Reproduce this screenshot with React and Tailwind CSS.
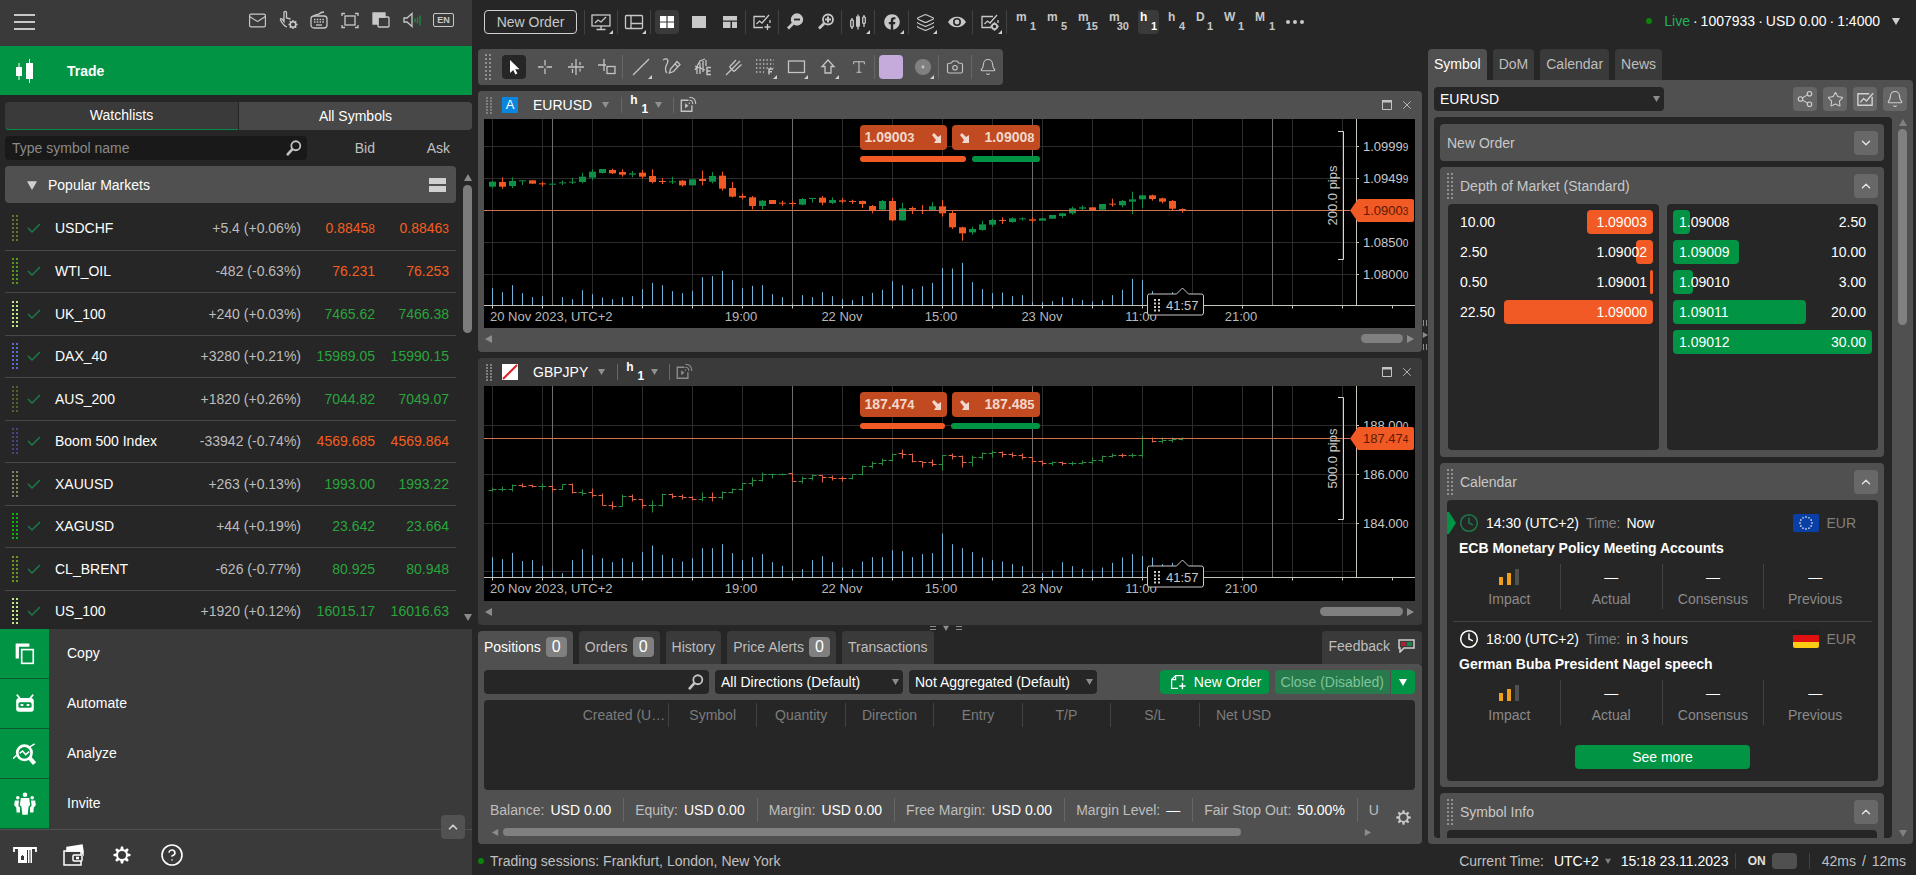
import { useState } from "react";
import { Mail, Bell, Camera, Layers, Share2, Star, Clock, Type, X, ChevronUp, ChevronDown, CircleHelp } from "lucide-react";
import { FaFacebook } from "react-icons/fa";

const SYMBOLS = [
  { name: "USDCHF", change: "+5.4 (+0.06%)", bid: "0.88458", ask: "0.88463", pip: true, up: false, signal: "#66772c" },
  { name: "WTI_OIL", change: "-482 (-0.63%)", bid: "76.231", ask: "76.253", up: false, signal: "#55981c" },
  { name: "UK_100", change: "+240 (+0.03%)", bid: "7465.62", ask: "7466.38", up: true, signal: "#bdea84" },
  { name: "DAX_40", change: "+3280 (+0.21%)", bid: "15989.05", ask: "15990.15", up: true, signal: "#5570cc" },
  { name: "AUS_200", change: "+1820 (+0.26%)", bid: "7044.82", ask: "7049.07", up: true, signal: "#52642c" },
  { name: "Boom 500 Index", change: "-33942 (-0.74%)", bid: "4569.685", ask: "4569.864", up: false, signal: "#474780" },
  { name: "XAUUSD", change: "+263 (+0.13%)", bid: "1993.00", ask: "1993.22", up: true, signal: "#87875c" },
  { name: "XAGUSD", change: "+44 (+0.19%)", bid: "23.642", ask: "23.664", up: true, signal: "#12b412" },
  { name: "CL_BRENT", change: "-626 (-0.77%)", bid: "80.925", ask: "80.948", up: true, signal: "#689622" },
  { name: "US_100", change: "+1920 (+0.12%)", bid: "16015.17", ask: "16016.63", up: true, signal: "#bdea84" }
];

// [direction, body top, body bottom, wick top, wick bottom] in thirds of a pixel
const CANDLES = [
  [1, 188, 203, 185, 207], [0, 189, 203, 175, 209], [1, 186, 201, 175, 207], [1, 184, 186, 184, 198],
  [0, 184, 194, 184, 194], [0, 193, 196, 188, 203], [1, 194, 196, 188, 199], [1, 190, 192, 184, 198],
  [1, 188, 190, 176, 195], [1, 173, 189, 161, 193], [1, 158, 176, 151, 183], [1, 150, 162, 150, 164],
  [0, 153, 163, 149, 165], [0, 159, 167, 151, 173], [1, 163, 167, 156, 175], [0, 161, 173, 153, 179],
  [0, 171, 189, 151, 193], [0, 186, 189, 177, 195], [1, 187, 190, 173, 195], [0, 185, 199, 183, 203],
  [1, 181, 199, 181, 199], [0, 180, 186, 155, 199], [1, 171, 188, 159, 193], [0, 170, 209, 158, 215],
  [0, 207, 233, 189, 235], [0, 231, 236, 223, 241], [0, 235, 261, 231, 271], [1, 245, 261, 243, 271],
  [0, 243, 255, 243, 255], [0, 251, 254, 245, 261], [0, 252, 255, 245, 263], [1, 240, 257, 237, 259],
  [1, 237, 240, 237, 251], [0, 236, 251, 231, 259], [1, 243, 252, 235, 255], [0, 244, 248, 237, 253],
  [0, 246, 249, 242, 255], [0, 246, 255, 245, 267], [0, 261, 273, 258, 283], [1, 246, 272, 243, 273],
  [0, 246, 304, 237, 307], [1, 268, 304, 251, 305], [0, 267, 272, 263, 285], [0, 273, 275, 258, 285],
  [1, 262, 273, 249, 275], [0, 262, 283, 243, 293], [0, 282, 325, 276, 330], [0, 325, 343, 323, 365],
  [1, 330, 340, 323, 347], [1, 316, 333, 305, 335], [1, 303, 317, 299, 323], [0, 303, 306, 295, 315],
  [1, 298, 309, 295, 311], [1, 298, 300, 295, 305], [0, 301, 305, 295, 311], [1, 298, 305, 298, 305],
  [1, 288, 299, 288, 299], [1, 283, 291, 281, 297], [1, 268, 283, 263, 287], [1, 265, 269, 259, 273],
  [0, 265, 274, 265, 274], [1, 255, 272, 255, 272], [0, 254, 257, 239, 263], [1, 246, 259, 243, 265],
  [1, 241, 248, 218, 285], [1, 229, 241, 227, 267], [0, 229, 240, 227, 245], [0, 238, 248, 236, 253],
  [0, 246, 269, 243, 273], [0, 270, 274, 268, 281]
];

// [direction, open, close, high, low] in thirds of a pixel
const BARS = [
  [1, 211, 208, 200, 214], [1, 208, 206, 198, 212], [1, 206, 196, 192, 214], [0, 196, 197, 190, 202],
  [0, 196, 199, 192, 200], [1, 199, 198, 190, 208], [0, 199, 206, 196, 214], [1, 206, 193, 192, 208],
  [0, 193, 217, 190, 218], [1, 217, 218, 208, 226], [0, 217, 224, 204, 232], [0, 224, 254, 220, 256],
  [0, 254, 257, 244, 268], [1, 257, 229, 222, 258], [0, 229, 238, 222, 244], [0, 238, 256, 236, 264],
  [1, 256, 255, 240, 276], [1, 255, 223, 220, 258], [0, 223, 229, 220, 234], [0, 229, 232, 222, 238],
  [0, 232, 238, 228, 240], [1, 238, 230, 216, 242], [0, 230, 231, 216, 242], [1, 231, 217, 212, 238],
  [1, 217, 208, 204, 218], [1, 208, 190, 188, 210], [1, 190, 181, 170, 198], [1, 181, 163, 156, 182],
  [1, 163, 163, 158, 174], [1, 163, 161, 159, 165], [0, 160, 182, 158, 184], [1, 182, 174, 168, 190],
  [1, 174, 166, 163, 180], [0, 166, 172, 164, 186], [0, 172, 173, 164, 180], [0, 173, 175, 168, 184],
  [1, 175, 163, 162, 178], [1, 163, 139, 136, 165], [1, 139, 129, 122, 145], [1, 129, 121, 114, 136],
  [1, 121, 103, 100, 124], [0, 100, 102, 88, 114], [0, 102, 124, 98, 126], [0, 124, 127, 122, 140],
  [0, 127, 131, 116, 138], [1, 131, 106, 104, 150], [0, 106, 109, 100, 118], [0, 109, 126, 104, 140],
  [1, 126, 112, 106, 138], [1, 112, 100, 96, 118], [1, 100, 96, 90, 110], [0, 96, 102, 92, 110],
  [0, 102, 104, 96, 110], [0, 104, 112, 100, 116], [0, 112, 124, 110, 130], [0, 124, 128, 120, 134],
  [1, 128, 127, 122, 134], [0, 127, 129, 124, 134], [1, 129, 128, 124, 136], [1, 128, 126, 120, 132],
  [1, 126, 120, 112, 132], [1, 120, 108, 106, 126], [1, 108, 104, 98, 112], [0, 104, 106, 100, 112],
  [1, 106, 104, 100, 112], [1, 104, 54, 44, 110], [0, 54, 62, 50, 66], [1, 62, 60, 52, 68],
  [1, 60, 56, 50, 66], [1, 56, 55, 50, 60]
];

const VOLUME_EUR = [
  52, 40, 61, 37, 25, 28, 0, 25, 19, 46, 34, 24, 19, 25, 28, 49, 68, 61, 43, 37, 44, 85, 88, 104, 76, 52, 59, 61, 34, 25, 6, 31,
  25, 40, 28, 19, 16, 28, 38, 47, 73, 61, 50, 58, 68, 112, 111, 128, 70, 49, 37, 39, 28, 31, 11, 10, 13, 25, 22, 16, 12, 16, 31,
  47, 80, 76, 43, 26, 40, 26
];

const VOLUME_GBP = [
  61, 55, 74, 49, 52, 35, 20, 13, 52, 85, 67, 58, 46, 58, 46, 76, 96, 68, 58, 48, 58, 88, 88, 100, 73, 52, 61, 70, 46, 35, 14, 25,
  52, 64, 46, 30, 25, 48, 61, 61, 82, 79, 61, 70, 73, 132, 100, 88, 76, 60, 52, 48, 40, 34, 12, 14, 22, 46, 34, 26, 22, 30, 44,
  60, 70, 64, 60, 40, 44, 28
];

const TIME_LABELS = [[257, "19:00"], [358, "22 Nov"], [457, "15:00"], [558, "23 Nov"], [657, "11:00"], [757, "21:00"]];

const EURUSD = {
  symbol: "EURUSD",
  sell: "1.09003",
  buy: "1.09008",
  sellBar: "w-[106px]",
  buyBar: "w-[68px]",
  height: 209,
  axis: 186.5,
  price: 91.5,
  grid: [[27.5, "1.0999", "9"], [59.5, "1.0949", "9"], [91.5, "", ""], [123.5, "1.0850", "0"], [155.5, "1.0800", "0"]],
  tag: ["1.0900", "3"],
  bracket: [12.5, 140.5],
  pips: "200.0 pips",
  volume: VOLUME_EUR
};

const GBPJPY = {
  symbol: "GBPJPY",
  sell: "187.474",
  buy: "187.485",
  sellBar: "w-[85px]",
  buyBar: "w-[89px]",
  height: 215,
  axis: 191.5,
  price: 52.5,
  grid: [[39.5, "188.00", "0"], [88.5, "186.00", "0"], [137.5, "184.00", "0"], [185.5, "", ""]],
  tag: ["187.47", "4"],
  bracket: [11.5, 133.5],
  pips: "500.0 pips",
  volume: VOLUME_GBP
};

const TIMEFRAMES = [["m", "1"], ["m", "5"], ["m", "15"], ["m", "30"], ["h", "1"], ["h", "4"], ["D", "1"], ["W", "1"], ["M", "1"]];

const SELL_DEPTH = [["1.09003", "10.00"], ["1.09002", "2.50"], ["1.09001", "0.50"], ["1.09000", "22.50"]];
const BUY_DEPTH = [["1.09008", "2.50"], ["1.09009", "10.00"], ["1.09010", "3.00"], ["1.09011", "20.00"], ["1.09012", "30.00"]];

const SUMMARY = [
  ["Balance:", "USD 0.00"],
  ["Equity:", "USD 0.00"],
  ["Margin:", "USD 0.00"],
  ["Free Margin:", "USD 0.00"],
  ["Margin Level:", "—"],
  ["Fair Stop Out:", "50.00%"],
  ["U", ""]
];

function Icon({ size = 20, className = "", children }) {
  return (
    <svg
      width={size}
      height={size}
      viewBox="0 0 20 20"
      fill="none"
      stroke="currentColor"
      strokeWidth="1.3"
      className={`shrink-0 ${className}`}
    >
      {children}
    </svg>
  );
}

function Dots({ cols = 2, rows = 7, color = "#8c8c8c", step = 4 }) {
  const dots = [];
  for (let r = 0; r < rows; r++) {
    for (let c = 0; c < cols; c++) dots.push([c * 4, r * step]);
  }
  return (
    <svg width={cols * 4 - 2} height={rows * step} className="shrink-0">
      {dots.map(([x, y]) => (
        <rect key={`${x}-${y}`} x={x} y={y + 1} width="2" height="2" fill={color} />
      ))}
    </svg>
  );
}

function Triangle({ dir = "down", size = 8, className = "" }) {
  const points = {
    down: "0,1 8,1 4,8",
    up: "0,7 8,7 4,0",
    left: "7,0 7,8 0,4",
    right: "1,0 1,8 8,4"
  };
  return (
    <svg width={size} height={size} viewBox="0 0 8 8" className={`shrink-0 ${className}`}>
      <polygon points={points[dir]} fill="currentColor" />
    </svg>
  );
}

function Divider({ className = "h-6 bg-[#424242]" }) {
  return <span className={`w-px shrink-0 ${className}`} />;
}

function ToolButton({ label, active, menu, className = "w-8", children }) {
  return (
    <button type="button" aria-label={label} className={`relative flex h-6 shrink-0 items-center justify-center ${className}`}>
      <span className={`flex size-6 items-center justify-center rounded ${active || ""}`}>{children}</span>
      {menu && (
        <svg width="4" height="4" className="absolute right-1 bottom-0">
          <polygon points="4,0 4,4 0,4" fill="#d0d0d0" />
        </svg>
      )}
    </button>
  );
}

function SearchIcon() {
  return (
    <Icon size={18}>
      <circle cx="12" cy="7.5" r="5" strokeWidth="2" />
      <path d="M8 11.5L3 17" strokeWidth="3" strokeLinecap="round" />
    </Icon>
  );
}

function ChartIcon({ children }) {
  return (
    <Icon>
      <path d="M13 4.5H2v11h9M18 8v3" />
      <path d="M4.500 12l3-3 2.500 2 7-8" />
      {children}
    </Icon>
  );
}

function GearIcon({ size = 20 }) {
  const teeth = [0, 45, 90, 135, 180, 225, 270, 315];
  return (
    <Icon size={size}>
      <circle cx="10" cy="10" r="5" strokeWidth="2" />
      {teeth.map(a => (
        <path key={a} d="M8.200 5l.7-3.500h2.200l.7 3.500z" fill="currentColor" stroke="none" transform={`rotate(${a} 10 10)`} />
      ))}
    </Icon>
  );
}

function SmallSelect({ label, options, className }) {
  return (
    <div className={`relative h-6 ${className}`}>
      <select aria-label={label} className="h-full w-full appearance-none rounded bg-[#262626] pl-1.5 text-sm leading-6 text-white outline-none">
        {options.map(o => (
          <option key={o}>{o}</option>
        ))}
      </select>
      <Triangle size={7} className="pointer-events-none absolute top-2 right-1 text-[#8c8c8c]" />
    </div>
  );
}

function SidebarHeader() {
  return (
    <div className="flex h-[46px] shrink-0 items-center justify-between bg-[#3a3a3a] pr-[18px] pb-0.5 pl-3.5 text-[#c8c8c8]">
      <button type="button" aria-label="Menu">
        <svg width="21" height="16" stroke="currentColor" strokeWidth="2">
          <path d="M0 1h21M0 8h21M0 15h21" />
        </svg>
      </button>
      <div className="flex items-center gap-[11px] pb-1">
        <button type="button" aria-label="Messages">
          <Mail size={19} strokeWidth={1.5} />
        </button>
        <button type="button" aria-label="Gestures">
          <Icon>
            <path d="M9 17c-3-1-5-4-6.500-7-.5-1.300 1-2 2-.5l1.500 2V2.500c0-1.500 2.500-1.500 2.500 0V8l4 1" />
            <circle cx="15" cy="14.500" r="2.800" strokeWidth="1.600" />
            <path d="M15 10v1.500M15 17.500V19M10.500 14.500H12M18 14.500h1.500M11.800 11.300l1 1M17.200 16.700l1 1M18.200 11.300l-1 1M12.800 16.700l-1 1" strokeWidth="1.500" />
          </Icon>
        </button>
        <button type="button" aria-label="Hotkeys">
          <Icon>
            <rect x="2" y="6" width="16" height="12" rx="3" />
            <path d="M5 6c1-2 4-1 5-2s2-2 5-2" />
            <path d="M5 9.500h10M5 12h10" strokeDasharray="1.500 1.300" />
            <path d="M7 15h6" />
          </Icon>
        </button>
        <button type="button" aria-label="Full screen">
          <Icon>
            <rect x="5" y="6" width="10" height="9" />
            <path d="M2 6V3.500H5M15 3.500h3V6M18 15v2.500H15M5 17.500H2V15" />
          </Icon>
        </button>
        <button type="button" aria-label="Detach window">
          <Icon>
            <path d="M2 3h12v4H7v7H2z" fill="currentColor" />
            <rect x="7" y="7" width="11" height="10" rx="1" />
          </Icon>
        </button>
        <button type="button" aria-label="Sound">
          <Icon>
            <path d="M2 8h3l5-4.500v13L5 12H2z" />
            <path d="M13 8.500v4M15.500 7.500v6M18 5.500v10" stroke="#1f8a45" />
          </Icon>
        </button>
        <button type="button" className="h-[14px] w-[21px] rounded-xs border border-current text-[9px] leading-3 font-bold">
          EN
        </button>
      </div>
    </div>
  );
}

function Price({ value, pip }) {
  if (!pip) return value;
  return (
    <>
      {value.slice(0, -1)}
      <span className="text-xs">{value.slice(-1)}</span>
    </>
  );
}

function Watchlist() {
  const [query, setQuery] = useState("");
  return (
    <div className="flex min-h-0 flex-1 flex-col overflow-hidden bg-[#262626] pt-[7px] pl-[5px]">
      <div className="flex h-7 shrink-0 text-white">
        <button type="button" className="flex-1 rounded-l border-b border-[#0b8a48] bg-[#3a3a3a] pb-px">Watchlists</button>
        <button type="button" className="ml-px flex-1 rounded-r bg-[#484848]">All Symbols</button>
      </div>
      <div className="mt-1.5 flex h-6 shrink-0 items-center text-[#c0c0c0]">
        <label className="flex h-6 w-[302px] items-center rounded bg-[#191919] pr-1">
          <input
            aria-label="Type symbol name"
            value={query}
            onChange={e => setQuery(e.target.value)}
            placeholder="Type symbol name"
            className="min-w-0 flex-1 bg-transparent px-[7px] outline-none placeholder:text-[#8a8a8a]"
          />
          <SearchIcon />
        </label>
        <span className="w-[68px] text-right">Bid</span>
        <span className="w-[75px] text-right">Ask</span>
      </div>
      <div className="mt-1.5 flex min-h-0 flex-1">
        <div className="w-[451px] overflow-hidden">
          <button type="button" className="mb-1 flex h-[37px] w-full items-center rounded bg-[#505050] pr-2.5 pl-[22px] text-white">
            <Triangle size={10} className="text-[#d0d0d0]" />
            <span className="ml-[11px]">Popular Markets</span>
            <span className="ml-auto flex w-[17px] flex-col gap-0.5">
              <span className="h-1.5 bg-[#d0d0d0]" />
              <span className="h-1.5 bg-[#d0d0d0]" />
            </span>
          </button>
          <table className="w-full table-fixed border-collapse">
            <colgroup>
              <col className="w-[50px]" />
              <col className="w-[125px]" />
              <col className="w-[121px]" />
              <col className="w-[74px]" />
              <col className="w-[81px]" />
            </colgroup>
            <tbody>
              {SYMBOLS.map(s => (
                <tr key={s.name} className="border-b border-[#484848] odd:h-[43px] even:h-[42px]">
                  <td className="pl-[7px]">
                    <span className="flex items-center gap-[9px]">
                      <Dots color={s.signal} />
                      <svg width="14" height="10" fill="none" stroke="#1c7a48" strokeWidth="1.500">
                        <path d="M1 5l4 4 8-8" />
                      </svg>
                    </span>
                  </td>
                  <td className="text-white">{s.name}</td>
                  <td className="text-right whitespace-nowrap text-[#bcbcbc]">{s.change}</td>
                  <td className={`text-right ${s.up ? "text-[#29a53c]" : "text-[#f25f20]"}`}>
                    <Price value={s.bid} pip={s.pip} />
                  </td>
                  <td className={`pr-[7px] text-right ${s.up ? "text-[#29a53c]" : "text-[#f25f20]"}`}>
                    <Price value={s.ask} pip={s.pip} />
                  </td>
                </tr>
              ))}
            </tbody>
          </table>
        </div>
        <div className="ml-[7px] flex w-[9px] flex-col items-center py-2 text-[#8a8a8a]">
          <Triangle dir="up" />
          <div className="mt-[3px] h-[148px] w-[9px] rounded-full bg-[#7c7c7c]" />
          <Triangle className="mt-auto" />
        </div>
      </div>
    </div>
  );
}

function SidebarNav() {
  const items = [
    ["Copy", (
      <Icon size={22} key="copy">
        <path d="M3 14V2h11" strokeWidth="3" />
        <rect x="7" y="6" width="10.500" height="12.500" strokeWidth="1.500" />
      </Icon>
    )],
    ["Automate", (
      <Icon size={22} key="automate">
        <path d="M2.500 1.500l3 3.500M17.500 1.500l-3 3.500" strokeWidth="1.500" />
        <path d="M5 4.500h10q3 0 3 3v7q0 2.500-2.500 2.500h-11Q2 17 2 14.500v-7q0-3 3-3z" fill="currentColor" stroke="none" />
        <rect x="4" y="8.500" width="12" height="5" rx="1.500" fill="#009444" stroke="none" />
        <path d="M6 11h2.500M11.500 11H14" strokeWidth="1.800" />
      </Icon>
    )],
    ["Analyze", (
      <Icon size={24} key="analyze">
        <circle cx="9.500" cy="9" r="6" strokeWidth="2.200" />
        <path d="M14 13.500l4 4.500" strokeWidth="3.500" />
        <path d="M5.500 9.500l2.500-2 2.500 3 3-2.500" strokeWidth="1.300" />
        <path d="M0 14l3-3M14 4l4-2.500" strokeWidth="1.300" />
      </Icon>
    )],
    ["Invite", (
      <Icon size={24} key="invite">
        <g fill="currentColor" stroke="none">
          <circle cx="10" cy="2.300" r="1.900" />
          <path d="M6.500 5h7l.8 6-1.300 1-.8 7H7.800L7 12l-1.300-1z" />
          <circle cx="4" cy="4.800" r="1.500" />
          <path d="M1.500 7H5l-.5 4.500 1.300 1.500V17H3l-.3-4L1 11z" />
          <circle cx="16" cy="4.800" r="1.500" />
          <path d="M18.500 7H15l.5 4.500-1.300 1.500V17H17l.3-4 1.700-2z" />
        </g>
      </Icon>
    )]
  ];
  return (
    <nav className="relative shrink-0 border-b border-[#505050] bg-[#3a3a3a]">
      {items.map(([label, icon]) => (
        <a key={label} href="#" className="flex h-[50px] items-center text-white">
          <span className="flex h-full w-[49px] items-center justify-center border-b border-[#0b5a30] bg-[#009444]">{icon}</span>
          <span className="ml-[18px] pb-0.5">{label}</span>
        </a>
      ))}
      <button type="button" aria-label="Collapse" className="absolute right-[7px] -bottom-2.5 flex size-6 items-center justify-center rounded bg-[#525252]">
        <ChevronUp size={14} strokeWidth={3} className="text-[#d0d0d0]" />
      </button>
    </nav>
  );
}

function SidebarFooter() {
  return (
    <div className="flex h-[45px] shrink-0 items-center gap-6 bg-[#3a3a3a] pt-1 pl-[13px] text-white">
      <button type="button" aria-label="Deposit">
        <svg width="24" height="18" fill="none" stroke="currentColor" strokeWidth="1.800">
          <path d="M1 6V2h22v4" />
          <path d="M5 3h14v14H5z" fill="currentColor" stroke="none" />
          <path d="M9.500 9v5M14.500 4v13M17 4v13" stroke="#3a3a3a" strokeWidth="1" />
          <rect x="8" y="10" width="3" height="4" fill="#3a3a3a" stroke="none" />
        </svg>
      </button>
      <button type="button" aria-label="Wallet" className="ml-px">
        <svg width="24" height="24" fill="none" stroke="currentColor" strokeWidth="1.500">
          <path d="M5 4.500L20 2l1 6v3l-2-3H5z" fill="currentColor" />
          <path d="M19 12V8H2v14h17v-4" />
          <rect x="11" y="12" width="9" height="6" rx="1" />
          <path d="M14 15h3" strokeWidth="2.500" />
        </svg>
      </button>
      <button type="button" aria-label="Settings" className="ml-0.5">
        <GearIcon />
      </button>
      <button type="button" aria-label="Help" className="ml-1">
        <CircleHelp size={24} strokeWidth={1.6} />
      </button>
    </div>
  );
}

function TopBar() {
  return (
    <header className="flex h-[45px] shrink-0 items-center pr-4 pb-px pl-3 text-[#c8c8c8]">
      <button type="button" className="mr-[7px] h-6 w-[93px] shrink-0 rounded border border-[#d0d0d0] leading-[22px]">New Order</button>
      <Divider />
      <ToolButton label="Workspaces" menu>
        <Icon>
          <rect x="1" y="3" width="18" height="11" />
          <path d="M4 11l3-3 3 2 5-5M10 14v3M5.500 17.500h9" />
        </Icon>
      </ToolButton>
      <Divider />
      <ToolButton label="Layout" menu>
        <Icon>
          <rect x="1.500" y="3.500" width="17" height="13" rx="1" />
          <path d="M7 4v12.500M7 11.500h11.500" />
        </Icon>
      </ToolButton>
      <Divider />
      <ToolButton label="Grid view" active="bg-[#3a3a3a] text-white">
        <Icon>
          <path d="M3 4h6.400v5.400H3zM10.600 4H17v5.400h-6.400zM3 10.600h6.400V16H3zM10.600 10.600H17V16h-6.400z" fill="currentColor" stroke="none" />
        </Icon>
      </ToolButton>
      <ToolButton label="Single view" className="w-[31px]">
        <Icon>
          <path d="M3 4h14v12H3z" fill="currentColor" stroke="none" />
        </Icon>
      </ToolButton>
      <ToolButton label="Free view" className="w-[31px]">
        <Icon>
          <path d="M3 4h14v4.500H3zM3 9.800h7.500V16H3zM12 9.800h5V16h-5z" fill="currentColor" stroke="none" />
        </Icon>
      </ToolButton>
      <Divider />
      <ToolButton label="Add chart">
        <ChartIcon>
          <path d="M15.500 12v6M12.500 15h6" />
        </ChartIcon>
      </ToolButton>
      <Divider />
      <ToolButton label="Zoom out" className="w-[31px]">
        <Icon>
          <circle cx="12" cy="7.500" r="5.500" fill="currentColor" />
          <path d="M8 11.500L3 16.500" strokeWidth="2.800" />
          <path d="M9 7.500h6" stroke="#262626" strokeWidth="1.800" />
        </Icon>
      </ToolButton>
      <ToolButton label="Zoom in" className="w-[31px]">
        <Icon>
          <circle cx="12" cy="7.500" r="5" strokeWidth="1.800" />
          <path d="M8 11.500L3 16.500" strokeWidth="2.800" />
          <path d="M9 7.500h6M12 4.500v6" strokeWidth="2" />
        </Icon>
      </ToolButton>
      <Divider />
      <ToolButton label="Chart type" menu>
        <Icon>
          <path d="M4 6v11M10 2.500v15M16 3v12" />
          <rect x="2.700" y="8" width="2.600" height="7" rx="1" fill="#262626" />
          <rect x="8.700" y="5" width="2.600" height="9" fill="currentColor" />
          <rect x="14.700" y="5" width="2.600" height="6.500" rx="1" fill="#262626" />
        </Icon>
      </ToolButton>
      <Divider />
      <ToolButton label="Indicators" menu className="w-[33px]">
        <FaFacebook size={16} />
      </ToolButton>
      <Divider />
      <ToolButton label="Objects" menu>
        <Layers size={19} strokeWidth={1.5} />
      </ToolButton>
      <ToolButton label="Viewing options" className="w-[31px]">
        <Icon>
          <path d="M1 10c4-7 14-7 18 0-4 7-14 7-18 0z" fill="currentColor" stroke="none" />
          <circle cx="10" cy="10" r="3.200" fill="currentColor" stroke="#262626" strokeWidth="1.600" />
        </Icon>
      </ToolButton>
      <Divider />
      <ToolButton label="Chart settings" menu className="w-[33px]">
        <ChartIcon>
          <circle cx="14.500" cy="14.500" r="2.600" strokeWidth="1.800" />
          <path d="M14.500 10.300v1.500M14.500 17.200v1.500M10.300 14.500h1.500M17.200 14.500h1.500" strokeWidth="1.500" />
        </ChartIcon>
      </ToolButton>
      <Divider />
      <div className="ml-[7px] flex">
        {TIMEFRAMES.map(([unit, n]) => (
          <button
            key={unit + n}
            type="button"
            className={`mr-[7px] flex h-6 shrink-0 flex-col justify-center rounded px-0.5 text-xs leading-[9px] font-bold ${
              unit === "h" || unit === "D" ? "w-[21px]" : "w-6"
            } ${unit + n === "h1" ? "bg-[#3a3a3a] text-white" : ""}`}
          >
            <span className="self-start">{unit}</span>
            <span className="self-end text-[11px]">{n}</span>
          </button>
        ))}
      </div>
      <button type="button" aria-label="More" className="ml-0.5 flex gap-[3px]">
        <span className="size-1 rounded-full bg-current" />
        <span className="size-1 rounded-full bg-current" />
        <span className="size-1 rounded-full bg-current" />
      </button>
      <button type="button" className="ml-auto flex items-center pb-0.5 whitespace-nowrap text-white">
        <span className="mr-3 size-1.5 rounded-full bg-[#0b830b]" />
        <span className="text-[#22b35a]">Live</span>
        <span className="ml-[3px]">·</span>
        <span className="ml-[3px]">1007933</span>
        <span className="ml-[3px]">·</span>
        <span className="ml-[3px]">USD 0.00</span>
        <span className="ml-[3px]">·</span>
        <span className="ml-[3px]">1:4000</span>
        <Triangle className="ml-3 text-[#d0d0d0]" />
      </button>
    </header>
  );
}

function DrawingToolbar() {
  return (
    <div className="flex h-9 w-fit items-center rounded bg-[#505050] pl-[7px] text-[#c4c4c4]">
      <Dots step={4} color="#909090" />
      <ToolButton label="Pointer" active="bg-[#262626] text-white" className="ml-[7px] w-[31px]">
        <Icon>
          <path d="M6 3v13l3.200-3 2.200 4.500 2-1-2.200-4.300h4.300z" fill="currentColor" stroke="none" />
        </Icon>
      </ToolButton>
      <ToolButton label="Crosshair" className="w-[31px]">
        <Icon>
          <path d="M10 3v5.500M10 11.500V17M3 10h5.500M11.500 10H17" />
        </Icon>
      </ToolButton>
      <ToolButton label="Market snap" className="w-[31px]">
        <Icon>
          <path d="M10 2v16M2 10h16M6 6v3M14 5v3M6.500 12v4M14 11.500v3" />
        </Icon>
      </ToolButton>
      <ToolButton label="Measure" className="w-[31px]">
        <Icon>
          <path d="M7 2v12M1 8h8" />
          <rect x="10" y="9.500" width="8" height="7" />
        </Icon>
      </ToolButton>
      <Divider className="h-6 bg-[#666]" />
      <ToolButton label="Lines" menu className="ml-0.5 w-[31px]">
        <Icon>
          <path d="M2 18L18 2" />
        </Icon>
      </ToolButton>
      <ToolButton label="Pencil" className="w-[31px]">
        <Icon>
          <path d="M1 3c5-3 6 1 3.500 5-1.500 3-2 5 .5 8" />
          <path d="M7.500 16l1-4L15 4.500l3 3L11.500 14.500z" />
          <path d="M13 7l3 3" />
        </Icon>
      </ToolButton>
      <ToolButton label="Fibonacci" className="w-[31px]">
        <Icon>
          <path d="M2 13l5-9 5-2M7 17V6M10 15V4M4 17v-6M13 9V3M2 9l10 4" />
          <path d="M18 10.500h-4v7h4M14 14h3.500" strokeWidth="1.500" />
        </Icon>
      </ToolButton>
      <ToolButton label="Pitchfork" className="w-[31px]">
        <Icon>
          <path d="M2 18l14-14M5.500 10L12 3M10 14.500L17.500 7.500M5.500 10l4.500 4.500" />
        </Icon>
      </ToolButton>
      <ToolButton label="Patterns" menu>
        <Icon>
          <path d="M1 3h18M1 7h18M1 11h18M1 15h8" strokeDasharray="1.300 2.200" />
          <path d="M14 17.500V12h4M14 14.700h3" strokeWidth="1.500" />
        </Icon>
      </ToolButton>
      <ToolButton label="Shapes" menu className="w-[31px]">
        <Icon>
          <rect x="1.500" y="4" width="16" height="11.500" />
        </Icon>
      </ToolButton>
      <ToolButton label="Arrows" menu className="w-[31px]">
        <Icon>
          <path d="M10 3l6 6.500h-3V16H7V9.500H4z" />
        </Icon>
      </ToolButton>
      <ToolButton label="Text" className="w-[31px]">
        <Type size={16} strokeWidth={1.6} />
      </ToolButton>
      <Divider className="h-6 bg-[#666]" />
      <button type="button" aria-label="Color" className="mx-1 size-6 rounded bg-[#c5abdb]" />
      <ToolButton label="Thickness" menu className="w-[31px]">
        <Icon size={18}>
          <circle cx="10" cy="10" r="9" fill="#808080" stroke="none" />
          <circle cx="10" cy="10" r="1.600" fill="currentColor" stroke="none" />
        </Icon>
      </ToolButton>
      <Divider className="h-6 bg-[#666]" />
      <ToolButton label="Snapshot">
        <Camera size={18} strokeWidth={1.5} />
      </ToolButton>
      <Divider className="h-6 bg-[#666]" />
      <ToolButton label="Alerts" className="w-[31px]">
        <Bell size={18} strokeWidth={1.5} />
      </ToolButton>
    </div>
  );
}

function ChartCanvas({ data, children }) {
  const { height, axis, price, grid, bracket } = data;
  const columns = Array.from({ length: 18 }, (_, i) => 8.5 + i * 50);
  const days = [68.5, 308.5, 548.5, 788.5];
  const middle = (bracket[0] + bracket[1]) / 2;
  return (
    <svg viewBox={`0 0 931 ${height}`} preserveAspectRatio="xMidYMid slice" className="h-full w-full bg-black text-[13px]">
      {columns.map(x => (
        <path key={x} d={`M${x} 0V${axis}`} stroke="#2c2c2c" />
      ))}
      {grid.map(([y]) => (
        <path key={y} d={`M0 ${y}H872`} stroke="#2c2c2c" />
      ))}
      {days.map(x => (
        <path key={x} d={`M${x} 0V${axis}`} stroke="#6e6e6e" />
      ))}
      {data.volume.map((v, i) => (
        <path key={i} d={`M${8.5 + i * 10} ${axis}v${-v / 3}`} stroke="#74b4da" />
      ))}
      {children}
      <path d={`M0 ${price}H866`} stroke="#d0724f" />
      <path d={`M854 ${bracket[0]}h5.500V${bracket[1]}h-5.500`} fill="none" stroke="#d8d8d8" />
      <text transform={`translate(853 ${middle}) rotate(-90)`} textAnchor="middle" fill="#c8c8c8">
        {data.pips}
      </text>
      <path d={`M872.500 0V${axis}M0 ${axis}H931`} stroke="#c8c4b8" />
      {columns.concat(908.5).map(x => (
        <path key={x} d={`M${x} ${axis}v3`} stroke="#c8c4b8" />
      ))}
      {grid.map(([y, label, small]) =>
        label ? (
          <g key={label} fill="#c8c8c8">
            <path d={`M873 ${y}h2`} stroke="#c8c4b8" />
            <text x="879" y={y + 4.5}>
              {label}
              <tspan className="text-[10px]">{small}</tspan>
            </text>
          </g>
        ) : null
      )}
      <path d={`M866 ${price}l8-11.500h54q2 0 2 2v19q0 2-2 2h-54z`} fill="#f15a24" />
      <text x="879" y={price + 4} fill="#5a1a00">
        {data.tag[0]}
        <tspan className="text-[10px]">{data.tag[1]}</tspan>
      </text>
      <g fill="#b8b8b8">
        <text x="6" y={axis + 15.5}>20 Nov 2023, UTC+2</text>
        {TIME_LABELS.map(([x, label]) => (
          <text key={label} x={x} y={axis + 15.5} textAnchor="middle">
            {label}
          </text>
        ))}
      </g>
      <path
        d={`M692.500 ${axis - 11.5}l6-6 6 6h13q2 0 2 2v17q0 2-2 2h-52q-2 0-2-2v-17q0-2 2-2z`}
        fill="#000"
        stroke="#c8c8c8"
      />
      {[0, 1, 2, 3].map(r => (
        <path key={r} d={`M670 ${axis - 5.5 + r * 3.5}h2m2 0h2`} stroke="#d0d0d0" strokeWidth="2" />
      ))}
      <text x="682" y={axis + 4.5} fill="#c8c8c8">41:57</text>
    </svg>
  );
}

function Candles() {
  return CANDLES.map(([up, top, bottom, high, low], i) => {
    const x = 8.5 + i * 10;
    const color = up ? "#0f8f47" : "#f15a24";
    return (
      <g key={i}>
        <path d={`M${x} ${high / 3}V${low / 3}`} stroke={color} />
        <rect x={x - 3.5} y={top / 3} width="7" height={Math.max(1, (bottom - top) / 3)} fill={color} />
      </g>
    );
  });
}

function OhlcBars() {
  const snap = v => Math.round(34 + v / 3) + 0.5;
  return BARS.map(([up, open, close, high, low], i) => {
    const x = 8.5 + i * 10;
    return (
      <path
        key={i}
        d={`M${x} ${snap(high)}V${snap(low)}M${x - 4} ${snap(open)}h4M${x} ${snap(close)}h4`}
        stroke={up ? "#2c8c45" : "#dd6545"}
      />
    );
  });
}

function QuickPrice({ value }) {
  return (
    <span>
      {value.slice(0, -1)}
      <span className="text-[13px]">{value.slice(-1)}</span>
    </span>
  );
}

function QuickArrow() {
  return (
    <svg width="10" height="10">
      <path d="M0 2l2-2 4 4 3-2v8H2l2-3z" fill="currentColor" />
    </svg>
  );
}

function ChartPanel({ data, active, badge, thumb, className, children }) {
  return (
    <section className={`flex min-h-0 flex-col rounded pr-[7px] pl-1.5 ${active ? "bg-[#505050]" : "bg-[#3a3a3a]"} ${className}`}>
      <div className="flex h-7 shrink-0 items-center pb-px text-[#c4c4c4]">
        <span className="flex w-[18px] pl-0.5">
          <Dots step={3} rows={6} color="#808080" />
        </span>
        {badge}
        <h2 className="ml-[15px] text-white">{data.symbol}</h2>
        <Triangle size={7} className="ml-[10px] text-[#909090]" />
        <Divider className="ml-3 h-4 bg-[#666]" />
        <button type="button" className="ml-2 flex h-6 w-[18px] flex-col justify-center text-xs leading-[9px] font-bold text-white">
          <span className="self-start">h</span>
          <span className="self-end">1</span>
        </button>
        <Triangle size={7} className="ml-[7px] text-[#909090]" />
        <Divider className="ml-[11px] h-4 bg-[#666]" />
        <button type="button" aria-label="Link channel" className={`ml-1.5 ${active ? "" : "text-[#8c8c8c]"}`}>
          <Icon size={17}>
            <path d="M10 5H1.500v13h12.500v-7" strokeWidth="1.600" />
            <path d="M6 8.500v6l4-3z" fill="currentColor" stroke="none" />
            <path d="M11 9.500v-2M11 5c2.500 0 4 1.500 4 4.500M11 1.500c5 0 7.500 3 7.500 8" />
          </Icon>
        </button>
        <button type="button" aria-label="Maximize" className="ml-auto">
          <svg width="10" height="10" fill="none" stroke="currentColor">
            <path d="M.500 .500h9v9h-9zM0 2h10" />
            <path d="M0 1h10" strokeWidth="2" />
          </svg>
        </button>
        <button type="button" aria-label="Close" className="mr-px ml-2">
          <X size={14} strokeWidth={1.5} />
        </button>
      </div>
      <div className="relative min-h-0 flex-1">
        <ChartCanvas data={data}>{children}</ChartCanvas>
        <div className="absolute inset-x-0 top-1.5 mx-auto w-[180px]">
          <div className="flex h-[25px] justify-between text-sm font-bold text-[#f2d8cc]">
            <button type="button" className="flex w-[87px] items-center justify-between rounded bg-[#c14a20] px-[5px]">
              <QuickPrice value={data.sell} />
              <QuickArrow />
            </button>
            <button type="button" className="flex w-[88px] items-center justify-between rounded bg-[#c14a20] pr-[5px] pl-2">
              <QuickArrow />
              <QuickPrice value={data.buy} />
            </button>
          </div>
          <div className="mt-1.5 flex justify-between">
            <span className={`h-1.5 rounded-full bg-[#f15a24] ${data.sellBar}`} />
            <span className={`h-1.5 rounded-full bg-[#009444] ${data.buyBar}`} />
          </div>
        </div>
      </div>
      <div className="flex h-6 shrink-0 items-center gap-[3px] px-px pb-[3px] text-[#8c8c8c]">
        <Triangle dir="left" />
        <span className={`ml-auto h-[9px] rounded-full bg-[#808080] ${thumb}`} />
        <Triangle dir="right" />
      </div>
    </section>
  );
}

function PositionsPanel() {
  const [search, setSearch] = useState("");
  const [tab, setTab] = useState("Positions");
  const tabs = [["Positions", 0], ["Orders", 0], ["History", null], ["Price Alerts", 0], ["Transactions", null]];
  const columns = ["Created (U…", "Symbol", "Quantity", "Direction", "Entry", "T/P", "S/L", "Net USD"];
  return (
    <section className="flex shrink-0 flex-col">
      <div className="flex h-[33px] gap-1.5 text-[#bebebe]">
        {tabs.map(([name, count]) => (
          <button
            key={name}
            type="button"
            onClick={() => setTab(name)}
            className={`flex items-center gap-[5px] rounded-t px-[6px] pb-px ${
              tab === name ? "bg-[#505050] text-white" : "bg-[#3a3a3a]"
            }`}
          >
            {name}
            {count !== null && (
              <span className="h-5 w-[21px] rounded bg-[#808080] text-base leading-5 text-white">{count}</span>
            )}
          </button>
        ))}
        <button type="button" className="ml-auto flex items-center gap-2 rounded-t bg-[#3a3a3a] px-[7px] pb-1">
          Feedback
          <svg width="17" height="14" fill="none" stroke="#d0d0d0" strokeWidth="1.500">
            <path d="M1 1h15v8H6l-4 4V9H1z" />
            <path d="M3 3h5v4H3z" fill="#b01f2a" stroke="none" />
            <path d="M9 3h5v4H9z" fill="#0b8a48" stroke="none" />
          </svg>
        </button>
      </div>
      <div className="rounded-b rounded-tr bg-[#505050] pt-1.5 pr-[7px] pl-1.5">
        <div className="flex gap-1.5">
          <label className="flex h-6 w-[225px] items-center rounded bg-[#262626] pr-1 text-[#c4c4c4]">
            <input
              aria-label="Search positions"
              value={search}
              onChange={e => setSearch(e.target.value)}
              className="min-w-0 flex-1 bg-transparent px-2 text-white outline-none"
            />
            <SearchIcon />
          </label>
          <SmallSelect label="Direction" options={["All Directions (Default)", "Buy", "Sell"]} className="w-[188px]" />
          <SmallSelect label="Aggregation" options={["Not Aggregated (Default)", "By Symbol"]} className="w-[188px]" />
          <button type="button" className="ml-auto flex h-6 items-center gap-2 rounded bg-[#009444] px-[7px] pl-2.5 text-white">
            <Icon size={16}>
              <path d="M10 18H2V7l5-5h9v6M2 7h5V2" strokeWidth="1.600" />
              <path d="M15.500 11v8M11.500 15h8" strokeWidth="1.800" />
            </Icon>
            New Order
          </button>
          <div className="flex h-6 gap-px">
            <button type="button" className="rounded-l bg-[#267a4b] px-1.5 text-[#7fc49b]">Close (Disabled)</button>
            <button type="button" aria-label="Close options" className="flex w-6 items-center justify-center rounded-r bg-[#009444] text-white">
              <Triangle />
            </button>
          </div>
        </div>
        <div className="mt-1.5 h-[90px] overflow-hidden rounded bg-[#262626] pt-[3px]">
          <table className="w-full table-fixed text-[#7c7c7c]">
            <colgroup>
              <col className="w-[96px]" />
              {columns.map(c => (
                <col key={c} className="w-[9.5%]" />
              ))}
              <col />
            </colgroup>
            <thead>
              <tr className="h-6">
                <th />
                {columns.map(c => (
                  <th
                    key={c}
                    className={`overflow-hidden font-normal whitespace-nowrap ${c === "Net USD" ? "" : "border-r border-[#424242]"}`}
                  >
                    {c}
                  </th>
                ))}
                <th />
              </tr>
            </thead>
          </table>
        </div>
        <div className="flex h-[54px] items-center">
          <div className="min-w-0 flex-1">
            <dl className="flex h-6 overflow-hidden pl-1.5 whitespace-nowrap">
              {SUMMARY.map(([label, value]) => (
                <div key={label} className="mr-[11px] flex shrink-0 items-center gap-1.5 border-r border-[#666] pr-3 last:mr-0 last:border-0 last:pr-0">
                  <dt className="text-[#bebebe]">{label}</dt>
                  <dd className="text-white">{value}</dd>
                </div>
              ))}
            </dl>
            <div className="flex items-center gap-1 pt-1.5 pr-2 pl-2 text-[#8c8c8c]">
              <Triangle dir="left" size={7} />
              <span className="h-2 w-[84%] rounded-full bg-[#808080]" />
              <Triangle dir="right" size={7} className="ml-auto" />
            </div>
          </div>
          <button type="button" aria-label="Panel settings" className="mr-[3px] ml-4 text-[#c8c8c8]">
            <GearIcon size={17} />
          </button>
        </div>
      </div>
    </section>
  );
}

function Splitter({ vertical }) {
  if (vertical) {
    return (
      <div className="flex w-1.5 shrink-0 flex-col items-center gap-1.5 pt-[271px] text-[#8c8c8c]">
        <span className="h-1.5 w-1 border-x border-current" />
        <Triangle dir="right" size={6} />
        <span className="h-1.5 w-1 border-x border-current" />
      </div>
    );
  }
  return (
    <div className="flex h-1.5 shrink-0 items-center justify-center gap-[7px] pr-2 text-[#8c8c8c]">
      <span className="h-1 w-1.5 border-y border-current" />
      <Triangle size={6} />
      <span className="h-1 w-1.5 border-y border-current" />
    </div>
  );
}

function CardHeader({ title, handle, open }) {
  return (
    <div className="flex h-[37px] items-center pr-1.5 pl-[7px] text-[#c8c8c8]">
      {handle && (
        <span className="mr-[7px] flex">
          <Dots cols={2} color="#909090" />
        </span>
      )}
      <h3>{title}</h3>
      <button type="button" aria-label={`Toggle ${title}`} className="ml-auto flex size-6 items-center justify-center rounded bg-[#686868] text-[#e0e0e0]">
        {open ? <ChevronUp size={14} strokeWidth={2.5} /> : <ChevronDown size={14} strokeWidth={2.5} />}
      </button>
    </div>
  );
}

function DepthSide({ rows, side }) {
  const sell = side === "sell";
  return (
    <ul className="flex-1 rounded bg-[#262626] p-1.5 text-white">
      {rows.map(([price, volume]) => (
        <li
          key={price}
          className={`relative mb-1.5 flex h-6 items-center justify-between px-1.5 ${sell ? "flex-row-reverse" : ""}`}
        >
          <span
            className={`absolute inset-y-0 rounded ${sell ? "right-0 bg-[#f15a24]" : "left-0 bg-[#009444]"}`}
            style={{ width: `${(Number(volume) / 30) * 100}%` }}
          />
          <span className="relative">{price}</span>
          <span className="relative">{volume}</span>
        </li>
      ))}
    </ul>
  );
}

function EuFlag() {
  const stars = Array.from({ length: 12 }, (_, i) => (i * Math.PI) / 6);
  return (
    <svg width="26" height="18">
      <rect width="26" height="18" rx="2" fill="#0a3fa8" />
      {stars.map(a => (
        <circle key={a} cx={13 + 6 * Math.cos(a)} cy={9 + 6 * Math.sin(a)} r="0.900" fill="#b8c8d0" />
      ))}
    </svg>
  );
}

function GermanFlag() {
  return (
    <svg width="26" height="18">
      <rect width="26" height="6" fill="#222" />
      <rect y="5" width="26" height="7" fill="#e01010" />
      <path d="M0 12h26v4q0 2-2 2H2q-2 0-2-2z" fill="#fccc14" />
    </svg>
  );
}

function ImpactBars() {
  return (
    <svg width="20" height="16" className="mx-auto">
      <rect x="0" y="8" width="4" height="8" fill="#f0a01c" />
      <rect x="8" y="4" width="4" height="12" fill="#f0a01c" />
      <rect x="16" y="0" width="4" height="16" fill="#505050" />
    </svg>
  );
}

function CalendarEvent({ time, when, title, flag, now }) {
  return (
    <article className="relative px-3">
      {now && (
        <svg width="9" height="22" className="absolute top-0 left-0">
          <polygon points="0,0 2,0 9,11 2,22 0,22" fill="#009444" />
        </svg>
      )}
      <div className="flex h-[22px] items-center text-white">
        <Clock size={20} strokeWidth={1.8} className={now ? "text-[#1d7a48]" : ""} />
        <span className="ml-[7px]">{time}</span>
        <span className="ml-[7px] text-[#808080]">Time:</span>
        <span className="ml-1.5">{when}</span>
        <span className="mr-[7px] ml-auto">{flag}</span>
        <span className="mr-2.5 text-[#808080]">EUR</span>
      </div>
      <h4 className="mt-[3px] h-[22px] leading-[22px] font-bold text-white">{title}</h4>
      <dl className="mt-[5px] grid h-[45px] grid-cols-4 divide-x divide-[#424242] text-center text-[#8a8a8a]">
        {["Impact", "Actual", "Consensus", "Previous"].map(label => (
          <div key={label} className="flex flex-col-reverse">
            <dt className="h-5 leading-5">{label}</dt>
            <dd className="h-[25px] pt-[5px] leading-4 text-white">{label === "Impact" ? <ImpactBars /> : "—"}</dd>
          </div>
        ))}
      </dl>
    </article>
  );
}

function SymbolPanel() {
  const [tab, setTab] = useState("Symbol");
  const iconButton = "flex size-6 items-center justify-center rounded bg-[#666]";
  return (
    <aside className="mr-[3px] flex min-h-0 w-[485px] shrink-0 flex-col">
      <div className="flex h-[31px] shrink-0 gap-1.5">
        {["Symbol", "DoM", "Calendar", "News"].map(name => (
          <button
            key={name}
            type="button"
            onClick={() => setTab(name)}
            className={`rounded-t px-1.5 pb-px ${tab === name ? "bg-[#505050] text-white" : "bg-[#3a3a3a] text-[#bebebe]"}`}
          >
            {name}
          </button>
        ))}
      </div>
      <div className="flex min-h-0 flex-1 flex-col rounded-b rounded-tr bg-[#505050] px-1.5 pt-[7px] pb-1.5">
        <div className="flex gap-1.5 text-[#d0d0d0]">
          <SmallSelect label="Symbol" options={["EURUSD", "GBPJPY", "USDCHF"]} className="mr-auto w-[230px]" />
          <button type="button" aria-label="Share" className={iconButton}>
            <Share2 size={18} strokeWidth={1.5} />
          </button>
          <button type="button" aria-label="Favorite" className={iconButton}>
            <Star size={17} strokeWidth={1.5} />
          </button>
          <button type="button" aria-label="Open chart" className={iconButton}>
            <Icon size={19}>
              <path d="M17 7v9H2V4h12" strokeWidth="1.500" />
              <path d="M4.500 13l3.500-4 3 2.500 7-8" strokeWidth="1.500" />
            </Icon>
          </button>
          <button type="button" aria-label="Alert" className={iconButton}>
            <Bell size={18} strokeWidth={1.5} />
          </button>
        </div>
        <div className="mt-1.5 flex min-h-0 flex-1">
          <div className="flex flex-1 flex-col gap-1.5 overflow-hidden rounded bg-[#262626] pt-[7px] pr-2 pl-1.5">
            <section className="shrink-0 rounded bg-[#505050]">
              <CardHeader title="New Order" />
            </section>
            <section className="shrink-0 rounded bg-[#505050] pb-[7px]">
              <CardHeader title="Depth of Market (Standard)" handle open />
              <div className="flex h-[246px] gap-2 pr-1.5 pl-2">
                <DepthSide rows={SELL_DEPTH} side="sell" />
                <DepthSide rows={BUY_DEPTH} side="buy" />
              </div>
            </section>
            <section className="shrink-0 rounded bg-[#505050] pb-1.5">
              <CardHeader title="Calendar" handle open />
              <div className="mr-1.5 ml-[7px] rounded bg-[#262626] pt-3 pb-3">
                <CalendarEvent time="14:30 (UTC+2)" when="Now" title="ECB Monetary Policy Meeting Accounts" flag={<EuFlag />} now />
                <div className="mx-1.5 mt-3 mb-1.5 h-px bg-[#424242]" />
                <CalendarEvent time="18:00 (UTC+2)" when="in 3 hours" title="German Buba President Nagel speech" flag={<GermanFlag />} />
                <button type="button" className="mx-auto mt-5 block h-6 w-[175px] rounded bg-[#009444] text-white">
                  See more
                </button>
              </div>
            </section>
            <section className="shrink-0 rounded bg-[#505050]">
              <CardHeader title="Symbol Info" handle open />
              <div className="mx-[7px] h-20 rounded bg-[#262626]" />
            </section>
          </div>
          <div className="ml-1.5 flex w-[9px] flex-col items-center pt-0.5 pb-px text-[#808080]">
            <Triangle dir="up" />
            <div className="mt-0.5 h-[196px] w-[9px] rounded-full bg-[#808080]" />
            <Triangle className="mt-auto" />
          </div>
        </div>
      </div>
    </aside>
  );
}

function StatusBar() {
  return (
    <footer className="flex h-[31px] shrink-0 items-center pt-[3px] pr-2.5 pl-1.5 whitespace-nowrap text-[#c0c0c0]">
      <span className="mr-1.5 size-1.5 rounded-full bg-[#0b830b]" />
      Trading sessions: Frankfurt, London, New York
      <span className="ml-auto">Current Time:</span>
      <button type="button" className="ml-2.5 flex items-center gap-1.5 text-white">
        UTC+2
        <Triangle size={6} className="text-[#808080]" />
      </button>
      <time className="ml-2.5 text-white">15:18 23.11.2023</time>
      <Divider className="ml-1.5 h-4 bg-[#424242]" />
      <label className="ml-3 flex items-center gap-1.5 text-xs font-bold text-[#e0e0e0]">
        ON
        <input type="checkbox" className="h-4 w-[25px] appearance-none rounded bg-[#505050]" />
      </label>
      <Divider className="mr-3 ml-3 h-4 bg-[#424242]" />
      <span>42ms</span>
      <span className="mx-1.5">/</span>
      <span>12ms</span>
    </footer>
  );
}

export default function App() {
  return (
    <div className="flex h-screen w-full overflow-hidden bg-[#262626] font-['Liberation_Sans',Arial,sans-serif] text-sm leading-5">
      <aside className="flex w-[472px] shrink-0 flex-col">
        <SidebarHeader />
        <a href="#" className="flex h-[49px] shrink-0 items-center bg-[#009444] font-bold text-white">
          <svg width="20" height="24" fill="currentColor" className="ml-[15px]">
            <path d="M1 8h6v9H1zM3.500 4h1v17h-1zM11 4h7v16h-7zM14 0h1v24h-1z" />
          </svg>
          <span className="ml-8">Trade</span>
        </a>
        <Watchlist />
        <SidebarNav />
        <SidebarFooter />
      </aside>
      <div className="flex min-w-0 flex-1 flex-col">
        <TopBar />
        <div className="flex min-h-0 flex-1 pt-1 pl-1.5">
          <main className="flex min-w-0 flex-1 flex-col">
            <DrawingToolbar />
            <ChartPanel
              data={EURUSD}
              active
              badge={<span className="size-4 bg-[#0a86e0] text-center text-[13px] leading-4 text-white">A</span>}
              thumb="w-[42px]"
              className="mt-1.5 flex-[261]"
            >
              <Candles />
            </ChartPanel>
            <ChartPanel
              data={GBPJPY}
              badge={
                <svg width="16" height="16">
                  <rect width="16" height="16" fill="#fff" />
                  <path d="M1 15L15 1" stroke="#e0202a" strokeWidth="2" />
                </svg>
              }
              thumb="w-[83px]"
              className="mt-1.5 flex-[267]"
            >
              <OhlcBars />
            </ChartPanel>
            <Splitter />
            <PositionsPanel />
          </main>
          <Splitter vertical />
          <SymbolPanel />
        </div>
        <StatusBar />
      </div>
    </div>
  );
}
